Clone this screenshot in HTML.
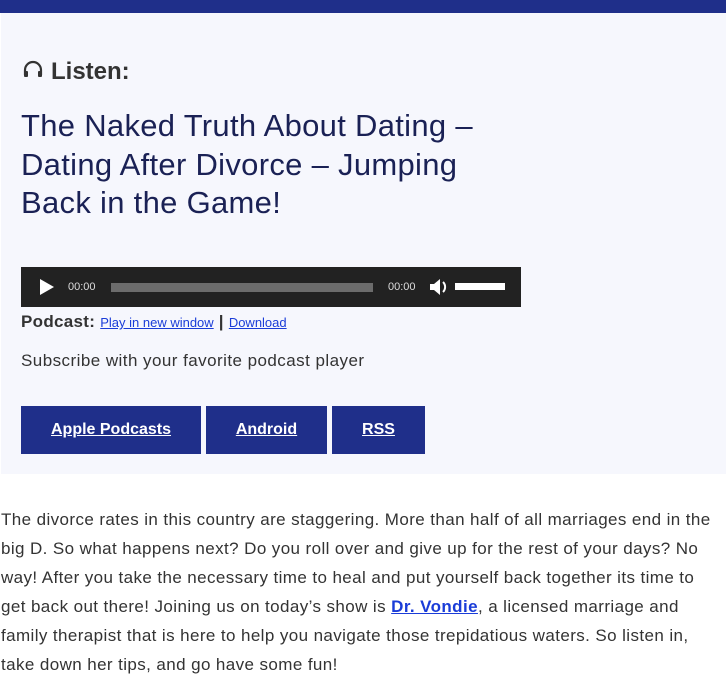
<!DOCTYPE html>
<html><head><meta charset="utf-8"><style>
*{margin:0;padding:0;box-sizing:border-box}
body{width:726px;height:674px;overflow:hidden;background:#fff;font-family:"Liberation Sans",Arial,sans-serif;position:relative}
.top{position:absolute;left:0;top:0;width:726px;height:13px;background:#1f2f8a}
.panel{position:absolute;left:1px;top:13px;width:725px;height:461px;background:#f6f7fd}
.abs{position:absolute}
h2{position:absolute;left:21px;top:58px;font-size:24px;font-weight:bold;color:#333}
h1{position:absolute;left:21px;top:107px;font-size:31px;font-weight:normal;line-height:38.5px;color:#1a2155;width:500px;letter-spacing:0.3px}
.player{position:absolute;left:21px;top:267px;width:500px;height:40px;background:#222}
.btn{position:absolute;top:406px;height:48px;background:#1f2f8a;color:#fff;font-weight:bold;font-size:16px;text-decoration:underline;display:flex;align-items:center;justify-content:center}
.body{position:absolute;left:1px;top:505px;width:716px;font-size:17px;letter-spacing:0.4px;line-height:29px;color:#333}
a{color:#1a3cd8}
</style></head><body>
<div class="top"></div>
<div class="panel"></div>
<svg class="abs" style="left:23px;top:60px" width="20" height="18" viewBox="0 0 20 18"><path d="M2 15V10a8 8 0 0 1 16 0v5" fill="none" stroke="#333" stroke-width="2.2"/><rect x="1" y="11" width="4" height="6" rx="1" fill="#333"/><rect x="15" y="11" width="4" height="6" rx="1" fill="#333"/></svg>
<h2><span style="margin-left:30px">Listen:</span></h2>
<h1>The Naked Truth About Dating – Dating After Divorce – Jumping Back in the Game!</h1>
<div class="player">
<svg class="abs" style="left:19px;top:12px" width="14" height="16"><path d="M0 0L14 8L0 16Z" fill="#fff"/></svg>
<span class="abs" style="left:47px;top:14px;color:#ddd;font-size:11px">00:00</span>
<div class="abs" style="left:90px;top:16px;width:262px;height:9px;background:#6c6c6c"></div>
<span class="abs" style="left:367px;top:14px;color:#ddd;font-size:11px">00:00</span>
<svg class="abs" style="left:408px;top:11px" width="20" height="18"><path d="M1 6h4l6-5v16l-6-5H1Z" fill="#fff"/><path d="M14 4a7 7 0 0 1 0 10" fill="none" stroke="#fff" stroke-width="2"/></svg>
<div class="abs" style="left:434px;top:16px;width:50px;height:7px;background:#fff"></div>
</div>
<div class="abs" style="left:21px;top:312px;font-size:17px;color:#333;letter-spacing:0.3px"><b>Podcast:</b> <a href="#" style="font-size:13px;letter-spacing:0">Play in new window</a> <b>|</b> <a href="#" style="font-size:13px;letter-spacing:0">Download</a></div>
<div class="abs" style="left:21px;top:351px;font-size:17px;letter-spacing:0.45px;color:#333">Subscribe with your favorite podcast player</div>
<div class="btn" style="left:21px;width:180px">Apple Podcasts</div>
<div class="btn" style="left:206px;width:121px">Android</div>
<div class="btn" style="left:332px;width:93px">RSS</div>
<div class="body">The divorce rates in this country are staggering. More than half of all marriages end in the big D. So what happens next? Do you roll over and give up for the rest of your days? No way! After you take the necessary time to heal and put yourself back together its time to get back out there! Joining us on today’s show is <a href="#"><b>Dr. Vondie</b></a>, a licensed marriage and family therapist that is here to help you navigate those trepidatious waters. So listen in, take down her tips, and go have some fun!</div>
</body></html>
